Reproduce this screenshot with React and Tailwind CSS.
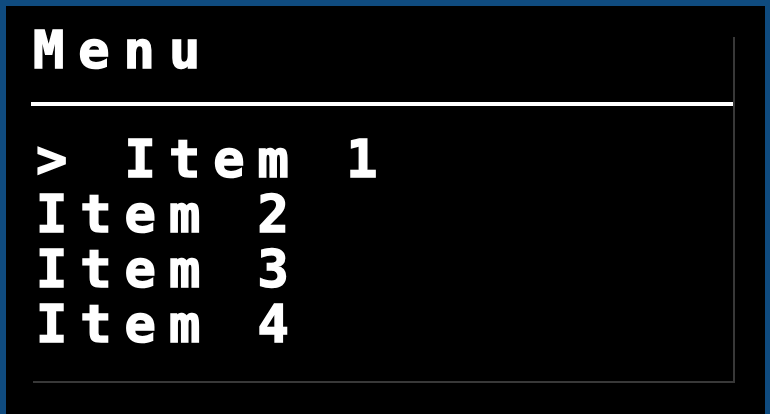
export default function App() {
  const items = ['Item 1', 'Item 2', 'Item 3', 'Item 4'];
  const selected = 0;

  return (
    <div className="w-[770px] h-[414px] overflow-hidden bg-black border-t-[6px] border-l-[6px] border-r-[5px] border-[#0f4b7f] font-['DejaVu_Sans_Mono',monospace] font-bold text-white [-webkit-text-stroke:1.5px_white]">
      {/* Screen panel */}
      <div className="flex flex-col ml-[25px] mt-[29px] w-[702px] h-[346px] shadow-[2px_2px_0_#383838]">
        <h1 className="-mt-[11px] pl-[2px] text-[52px] leading-[52px] tracking-[14px]">Menu</h1>
        <div className="mt-[26px] h-[4px] bg-white" />

        <ul className="mt-[26px] pl-[5px] text-[52px] leading-[55px] tracking-[13px]">
          {items.map((item, i) => (
            <li key={item} className="whitespace-pre">
              {i === selected ? '> ' + item : item}
            </li>
          ))}
        </ul>
      </div>
    </div>
  );
}
